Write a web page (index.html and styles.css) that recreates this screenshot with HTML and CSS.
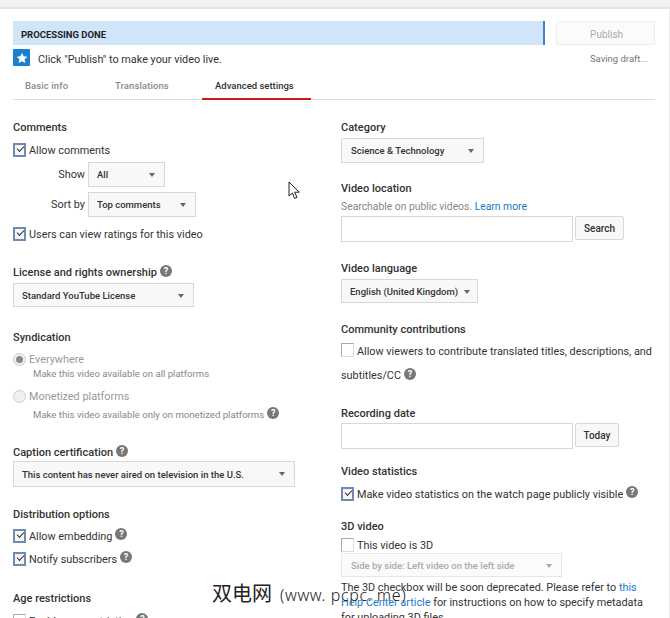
FILE: index.html
```html
<!DOCTYPE html>
<html lang="en">
<head>
<meta charset="utf-8">
<title>Advanced settings</title>
<link rel="stylesheet" href="styles.css">
</head>
<body>
<div class="topbar"></div>
<main class="page">
  <div class="status-row">
    <div class="progress">PROCESSING DONE</div>
    <button class="btn publish">Publish</button>
  </div>
  <div class="notice-row">
    <span class="star"><svg width="12" height="12" viewBox="0 0 24 24"><path fill="#fff" d="M12 1.5l3.2 7.1 7.6.8-5.7 5.1 1.6 7.6L12 18.3l-6.7 3.8 1.6-7.6L1.2 9.4l7.6-.8z"/></svg></span>
    <span class="notice-text">Click "Publish" to make your video live.</span>
    <span class="saving">Saving draft...</span>
  </div>
  <nav class="tabs">
    <span class="tab tab-basic">Basic info</span>
    <span class="tab tab-trans">Translations</span>
    <span class="tab tab-active">Advanced settings</span>
  </nav>
  <div class="columns">
    <div class="col col-left">
      <h3 class="label">Comments</h3>
      <div class="check-row r-allow"><span class="cb on"></span>Allow comments</div>
      <div class="inline-row r-show"><span class="inline-label">Show</span><span class="select s-show">All<i class="caret"></i></span></div>
      <div class="inline-row r-sort"><span class="inline-label">Sort by</span><span class="select s-sort">Top comments<i class="caret"></i></span></div>
      <div class="check-row r-ratings"><span class="cb on"></span>Users can view ratings for this video</div>

      <h3 class="label l-license">License and rights ownership<span class="help">?</span></h3>
      <span class="select s-license">Standard YouTube License<i class="caret"></i></span>

      <h3 class="label l-synd">Syndication</h3>
      <div class="radio-row r-every"><span class="radio sel"></span>Everywhere</div>
      <div class="sub">Make this video available on all platforms</div>
      <div class="radio-row r-mon"><span class="radio"></span>Monetized platforms</div>
      <div class="sub sub-mon">Make this video available only on monetized platforms<span class="help">?</span></div>

      <h3 class="label l-caption">Caption certification<span class="help">?</span></h3>
      <span class="select s-caption">This content has never aired on television in the U.S.<i class="caret"></i></span>

      <h3 class="label l-dist">Distribution options</h3>
      <div class="check-row r-embed"><span class="cb on"></span>Allow embedding<span class="help">?</span></div>
      <div class="check-row r-notify"><span class="cb on"></span>Notify subscribers<span class="help">?</span></div>

      <h3 class="label l-age">Age restrictions</h3>
      <div class="check-row r-enable"><span class="cb"></span>Enable age restriction<span class="help">?</span></div>
    </div>
    <div class="col col-right">
      <h3 class="label">Category</h3>
      <span class="select s-category">Science &amp; Technology<i class="caret"></i></span>

      <h3 class="label l-location">Video location</h3>
      <div class="hint">Searchable on public videos. <a class="link">Learn more</a></div>
      <div class="field-row"><span class="input"></span><button class="btn side">Search</button></div>

      <h3 class="label l-lang">Video language</h3>
      <span class="select s-lang">English (United Kingdom)<i class="caret"></i></span>

      <h3 class="label l-comm">Community contributions</h3>
      <div class="wrap-check"><span class="cb"></span>Allow viewers to contribute translated titles, descriptions, and subtitles/CC<span class="help">?</span></div>

      <h3 class="label l-date">Recording date</h3>
      <div class="field-row"><span class="input"></span><button class="btn side today">Today</button></div>

      <h3 class="label l-stats">Video statistics</h3>
      <div class="check-row r-stats"><span class="cb on"></span>Make video statistics on the watch page publicly visible<span class="help">?</span></div>

      <h3 class="label l-3d">3D video</h3>
      <div class="check-row r-3d"><span class="cb"></span>This video is 3D</div>
      <span class="select s-3d">Side by side: Left video on the left side<i class="caret"></i></span>
      <p class="note">The 3D checkbox will be soon deprecated. Please refer to <a class="link">this Help Center article</a> for instructions on how to specify metadata for uploading 3D files.</p>
    </div>
  </div>
</main>
<svg class="cursor" width="13" height="19" viewBox="0 0 13 19"><path fill="#fff" stroke="#222" stroke-width="1" d="M1 1v14l3.4-3 2.2 5.4 2.4-1-2.3-5.2h4.6z"/></svg>
<div class="watermark">双电网<span class="wm-latin">(www. pcpc. me)</span></div>
</body>
</html>
```
FILE: styles.css
```css
* { box-sizing: border-box; }
html, body { margin: 0; padding: 0; height: 618px; overflow: hidden; background: #fff; }
body { position: relative; font-family: Roboto, "Liberation Sans", sans-serif; font-size: 10.85px; color: #333; }
.topbar { height: 9px; background: #f1f1f1; border-bottom: 2px solid #e4e4e4; }
.page { padding: 12px 14px 0 13px; border-right: 1px solid #eee; height: 609px; }

.status-row { display: flex; gap: 11px; height: 24px; }
.progress { width: 533px; background: #d0e5f9; border-right: 2px solid #3b83dc; font-size: 9.5px; font-weight: 700; color: #222; line-height: 27px; padding-left: 8px; }
.btn { font-family: inherit; font-size: 10px; font-weight: 500; padding: 0; border: 1px solid #d8d8d8; border-radius: 2px; background: #f8f8f8; color: #333; }
.publish { width: 99px; height: 24px; color: #aaa; border-color: #eee; background: #fbfbfb; font-weight: 400; padding: 2px 0 0 2px; }

.notice-row { display: flex; align-items: center; height: 17px; margin-top: 4px; }
.star { width: 17px; height: 17px; background: #1b7fcc; border-radius: 1px; display: flex; align-items: center; justify-content: center; }
.notice-text { margin-left: 8px; font-size: 10.85px; margin-top: 4px; }
.saving { margin-left: auto; margin-right: 7px; font-size: 9.5px; color: #777; margin-top: 2px; }

.tabs { display: flex; height: 34px; border-bottom: 1px solid #ddd; }
.tab { font-size: 9.5px; font-weight: 500; color: #8a8a8a; padding-top: 14px; height: 34px; letter-spacing: .1px; }
.tab-basic { margin-left: 12px; width: 90px; }
.tab-trans { width: 87px; }
.tab-active { width: 109px; padding-left: 13px; color: #333; border-bottom: 2px solid #cc181e; letter-spacing: 0; }

.columns { display: flex; }
.col { display: flex; flex-direction: column; align-items: flex-start; }
.col-left { width: 328px; flex: none; }
.col-right { flex: 1; min-width: 0; }

.label { margin: 0; font-size: 11px; font-weight: 500; line-height: 14px; color: #333; }
.col > .label:first-child { margin-top: 21px; }

.check-row, .radio-row { display: flex; align-items: center; font-size: 10.85px; height: 16px; color: #333; white-space: nowrap; }
.radio-row { color: #999; }
.cb { width: 13px; height: 14px; border: 1px solid #aaa; border-right-color: #ddd; border-bottom-color: #ddd; margin-right: 3px; position: relative; flex: none; background: #fff; }
.cb.on { border: 2px solid #6d8bb3; background: #f6f6f6; }
.cb.on::after { content: ""; position: absolute; left: 2px; top: 1px; width: 6px; height: 3px; border-left: 1.3px solid #333; border-bottom: 1.3px solid #333; transform: rotate(-45deg); }
.radio { width: 13px; height: 13px; border-radius: 50%; border: 1px solid #ccc; background: #f0f0f0; margin-right: 3px; position: relative; flex: none; }
.radio.sel::after { content: ""; position: absolute; left: 2px; top: 2px; width: 7px; height: 7px; border-radius: 50%; background: #888; }

.select { display: inline-flex; align-items: center; position: relative; height: 25px; padding-left: 8px; font-size: 9.5px; font-weight: 500; color: #333; background: #f8f8f8; border: 1px solid #d8d8d8; }
.caret { position: absolute; right: 9px; top: 10px; width: 0; height: 0; border-left: 3.5px solid transparent; border-right: 3.5px solid transparent; border-top: 4px solid #666; }
.help { display: inline-block; width: 12px; height: 12px; border-radius: 50%; background: #777; color: #fff; font-size: 9px; font-weight: 700; line-height: 12px; text-align: center; margin-left: 3px; position: relative; top: -2px; flex: none; }

.r-allow { margin-top: 7px; }
.inline-row { display: flex; align-items: center; font-size: 10.85px; }
.inline-label { width: 72px; text-align: right; margin-right: 3px; }
.r-show { margin-top: 4px; }
.r-sort { margin-top: 5px; }
.s-show { width: 77px; }
.s-sort { width: 108px; }
.r-ratings { margin-top: 9px; }
.l-license { margin-top: 24px; }
.s-license { width: 181px; margin-top: 3px; height: 24px; }
.l-synd { margin-top: 24px; }
.r-every { margin-top: 6px; }
.sub { font-size: 9.6px; color: #888; margin-left: 20px; line-height: 12px; margin-top: 1px; }
.r-mon { margin-top: 8px; }
.sub-mon { margin-top: 5px; }
.l-caption { margin-top: 25px; }
.s-caption { width: 282px; margin-top: 1px; height: 26px; }
.l-dist { margin-top: 21px; }
.r-embed { margin-top: 6px; }
.r-notify { margin-top: 7px; }
.l-age { margin-top: 25px; }
.r-enable { margin-top: 7px; }

.col-right .select { padding-left: 9px; }
.s-category { width: 143px; margin-top: 3px; }
.l-location { margin-top: 19px; }
.hint { font-size: 10.35px; color: #888; margin-top: 4px; line-height: 14px; }
.link { color: #167ac6; }
.field-row { display: flex; gap: 2px; margin-top: 2px; align-items: flex-start; }
.input { width: 232px; height: 26px; border: 1px solid #d8d8d8; background: #fff; }
.side { width: 49px; height: 24px; }
.today { width: 44px; }
.l-lang { margin-top: 20px; }
.col-right .s-lang { width: 137px; margin-top: 3px; height: 24px; padding-left: 8px; }
.s-lang .caret { right: 7px; }
.l-comm { margin-top: 20px; }
.wrap-check { font-size: 10.85px; line-height: 24px; margin-top: 3px; width: 316px; }
.wrap-check .cb { display: inline-block; vertical-align: -2px; margin-right: 3px; }
.l-date { margin-top: 19px; }
.l-stats { margin-top: 16px; }
.r-stats { margin-top: 7px; }
.l-3d { margin-top: 18px; }
.r-3d { margin-top: 3px; }
.s-3d { width: 221px; margin-top: 0; height: 24px; background: #fbfbfb; color: #aaa; border-color: #e8e8e8; }
.s-3d .caret { border-top-color: #aaa; }
.note { margin: 3px 0 0; font-size: 10.85px; line-height: 15px; width: 312px; color: #333; }

.cursor { position: absolute; left: 288px; top: 181px; }
.watermark { position: absolute; left: 212px; top: 580px; font-family: "Noto Sans CJK SC", sans-serif; font-size: 20px; line-height: 26px; color: #222; white-space: nowrap; text-shadow: 0 0 2px #fff, 0 0 2px #fff; }
.wm-latin { font-family: "Noto Sans", sans-serif; font-size: 16px; font-weight: 300; margin-left: 8px; letter-spacing: .6px; }
```
